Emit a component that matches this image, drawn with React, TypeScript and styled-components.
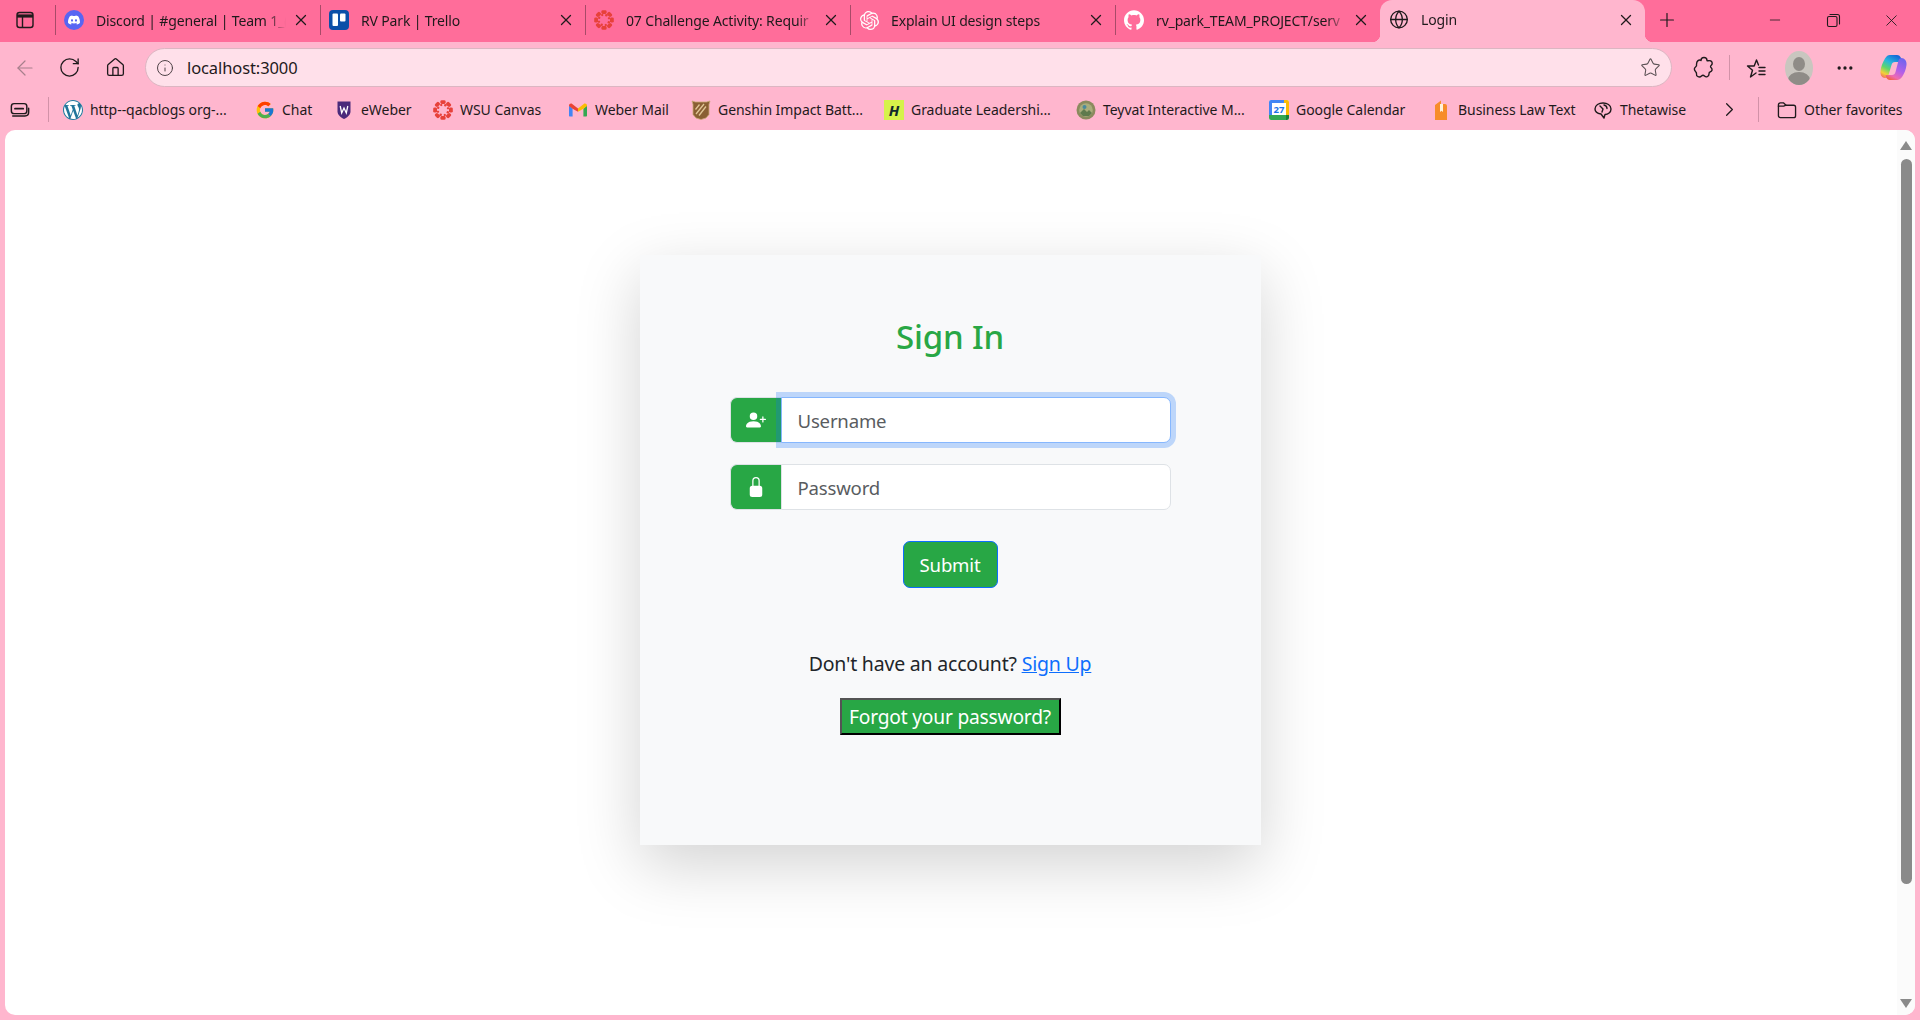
import React from 'react';
import styled, { createGlobalStyle } from 'styled-components';
import {
  ArrowLeft,
  ChevronRight,
  Globe,
  Home,
  Info,
  MoreHorizontal,
  Plus,
  RotateCw,
  Star,
  X,
  Minus,
} from 'lucide-react';
import { BsLockFill, BsPersonPlusFill } from 'react-icons/bs';
import { FaDiscord } from 'react-icons/fa';
import { FcGoogle } from 'react-icons/fc';
import { SiGithub, SiOpenai, SiWordpress } from 'react-icons/si';

const GlobalStyle = createGlobalStyle`
  html, body {
    margin: 0;
    padding: 0;
    height: 1020px;
    overflow: hidden;
    background: #ffb6ce;
  }
  * {
    box-sizing: border-box;
  }
`;

const chromeFont = `'Noto Sans', 'Open Sans', sans-serif`;

// Browser chrome
const Window = styled.div`
  width: 1920px;
  height: 1020px;
  display: flex;
  flex-direction: column;
  font-family: ${chromeFont};
  color: #1f1a1c;
`;

const TabStrip = styled.div`
  height: 42px;
  display: flex;
  align-items: stretch;
  background: #ff6d9a;
`;

const SidebarButton = styled.div`
  width: 55px;
  display: flex;
  align-items: center;
  justify-content: center;
  padding-bottom: 2px;
  padding-right: 5px;
`;

const Tab = styled.div<{ $active?: boolean }>`
  position: relative;
  width: 265px;
  height: ${props => (props.$active ? '42px' : '30px')};
  margin-top: ${props => (props.$active ? '0' : '5px')};
  padding: ${props => (props.$active ? '0 10px 3px 9px' : '0 10px 0 8px')};
  display: flex;
  align-items: center;
  gap: 12px;
  font-size: 14px;
  letter-spacing: -0.15px;
  border-left: ${props => (props.$active ? 'none' : '1px solid #a84a68')};
  background: ${props => (props.$active ? '#ffb6ce' : 'transparent')};
  border-radius: ${props => (props.$active ? '12px 12px 0 0' : '0')};

  ${props =>
    props.$active &&
    `
    &::before, &::after {
      content: '';
      position: absolute;
      bottom: 0;
      width: 8px;
      height: 8px;
    }
    &::before {
      left: -8px;
      background: radial-gradient(circle at 0 0, #ff6d9a 8px, #ffb6ce 8.5px);
    }
    &::after {
      right: -8px;
      background: radial-gradient(circle at 100% 0, #ff6d9a 8px, #ffb6ce 8.5px);
    }
  `}
`;

const TabIcon = styled.span`
  width: 20px;
  height: 20px;
  flex: none;
  display: flex;
  align-items: center;
  justify-content: center;
`;

const TabTitle = styled.span`
  flex: 1;
  min-width: 0;
  margin-right: -6px;
  overflow: hidden;
  white-space: nowrap;
  -webkit-mask-image: linear-gradient(to right, #000 90%, transparent 100%);
  mask-image: linear-gradient(to right, #000 90%, transparent 100%);
`;

const NewTab = styled.div`
  width: 44px;
  display: flex;
  align-items: center;
  justify-content: center;
  padding-bottom: 3px;
`;

const WindowControls = styled.div`
  margin-left: auto;
  display: flex;
`;

const WindowControl = styled.div`
  width: 58px;
  display: flex;
  align-items: center;
  justify-content: center;
  padding-bottom: 2px;
`;

const Toolbar = styled.div`
  height: 47px;
  padding: 6px 0 2px 2px;
  display: flex;
  align-items: stretch;
  background: #ffb6ce;
`;

const ToolButton = styled.div<{ $w: number; $faded?: boolean }>`
  width: ${props => props.$w}px;
  flex: none;
  display: flex;
  align-items: center;
  justify-content: center;
  color: ${props => (props.$faded ? '#a77f8c' : '#1f1a1c')};
`;

const AddressBar = styled.div`
  flex: 1;
  margin-left: 6px;
  padding: 0 10px;
  display: flex;
  align-items: center;
  gap: 13px;
  background: #ffe0ea;
  border: 1px solid #dcb6c2;
  border-radius: 20px;
  font-size: 16.5px;
  letter-spacing: -0.1px;
`;

const UrlText = styled.span`
  flex: 1;
`;

const ToolGroup = styled.div`
  margin-left: 11px;
  padding-right: 4px;
  display: flex;
  align-items: stretch;
`;

const ToolSeparator = styled.div`
  width: 1px;
  height: 25px;
  margin: 7px 4px 0;
  background: #d292a8;
`;

const Avatar = styled.div`
  position: relative;
  width: 28px;
  height: 34px;
  border-radius: 14px / 17px;
  overflow: hidden;
  background: #c9c6bf;

  &::before {
    content: '';
    position: absolute;
    left: 8px;
    top: 6px;
    width: 12px;
    height: 14px;
    border-radius: 50%;
    background: #8f8c87;
  }
  &::after {
    content: '';
    position: absolute;
    left: 3px;
    top: 21px;
    width: 22px;
    height: 16px;
    border-radius: 50%;
    background: #8f8c87;
  }
`;

const BookmarksBar = styled.div`
  height: 41px;
  padding-left: 10px;
  display: flex;
  align-items: center;
  background: #ffb6ce;
  font-size: 14px;
  letter-spacing: -0.05px;
`;

const BarSeparator = styled.div<{ $left: number; $right: number }>`
  width: 1px;
  height: 25px;
  flex: none;
  margin: 0 ${props => props.$right}px 0 ${props => props.$left}px;
  background: #d292a8;
`;

const Bookmark = styled.div<{ $w: number }>`
  width: ${props => props.$w}px;
  flex: none;
  display: flex;
  align-items: center;
  gap: 7px;
  white-space: nowrap;
`;

const BookmarkIcon = styled.span`
  width: 20px;
  height: 20px;
  flex: none;
  display: flex;
  align-items: center;
  justify-content: center;
`;

const WordpressBadge = styled.span`
  width: 20px;
  height: 20px;
  display: flex;
  align-items: center;
  justify-content: center;
  border-radius: 50%;
  background: #fff;
  color: #21759b;
`;

const HBadge = styled.span`
  width: 20px;
  height: 20px;
  display: flex;
  align-items: center;
  justify-content: center;
  background: #d6f24a;
  color: #10282c;
  font-size: 15px;
  font-weight: 700;
  font-style: italic;
  letter-spacing: 0;
`;

// Page viewport
const Viewport = styled.div`
  height: 885px;
  margin: 0 5px;
  display: flex;
  background: #ffffff;
  border-radius: 10px;
  overflow: hidden;
`;

const Content = styled.main`
  flex: 1;
  padding: 125px 2px 0 0;
  display: flex;
  justify-content: center;
  align-items: flex-start;
  font-family: 'Noto Sans', 'Open Sans', sans-serif;
`;

const Scrollbar = styled.div`
  width: 18px;
  padding: 11px 3px 7px 3px;
  display: flex;
  flex-direction: column;
  align-items: center;
  background: #fbfbfb;
`;

const ArrowUp = styled.div`
  width: 0;
  height: 0;
  border-left: 6px solid transparent;
  border-right: 6px solid transparent;
  border-bottom: 9px solid #8a8a8a;
`;

const ArrowDown = styled.div`
  width: 0;
  height: 0;
  margin-top: auto;
  border-left: 6px solid transparent;
  border-right: 6px solid transparent;
  border-top: 9px solid #8a8a8a;
`;

const Thumb = styled.div`
  width: 11px;
  height: 725px;
  margin-top: 9px;
  border-radius: 6px;
  background: #8a8a8a;
`;

// Login card
const Card = styled.section`
  width: 621px;
  height: 590px;
  padding-top: 54px;
  display: flex;
  flex-direction: column;
  align-items: center;
  background: #f8f9fa;
  box-shadow: 0 20px 60px rgba(0, 0, 0, 0.175);
`;

const Title = styled.h2`
  margin: 0 0 32px;
  height: 56px;
  line-height: 56px;
  font-size: 33px;
  font-weight: 550;
  letter-spacing: -0.2px;
  color: #28a745;
`;

const Form = styled.form`
  width: 441px;
  display: flex;
  flex-direction: column;
  align-items: center;
  gap: 21px;
`;

const InputGroup = styled.div`
  width: 100%;
  height: 46px;
  display: flex;
`;

const Addon = styled.span`
  width: 51px;
  flex: none;
  display: flex;
  align-items: center;
  justify-content: center;
  background: #28a745;
  color: #fff;
  border: 1px solid #dee2e6;
  border-right: none;
  border-radius: 7px 0 0 7px;
`;

const Field = styled.input<{ $focused?: boolean }>`
  position: relative;
  flex: 1;
  min-width: 0;
  padding: 0 16px;
  font-family: inherit;
  font-size: 18.6px;
  letter-spacing: -0.2px;
  background: #fff;
  outline: none;
  border: 1px solid ${props => (props.$focused ? '#86b7fe' : '#dee2e6')};
  border-radius: 0 7px 7px 0;
  box-shadow: ${props => (props.$focused ? '0 0 0 5px rgba(13, 110, 253, 0.25)' : 'none')};

  &::placeholder {
    color: #595c5f;
    opacity: 1;
  }
`;

const SubmitButton = styled.button`
  width: 95px;
  height: 47px;
  margin-top: 10px;
  font-family: inherit;
  font-size: 18.6px;
  letter-spacing: -0.2px;
  color: #fff;
  background: #28a745;
  border: 1px solid #0d6efd;
  border-radius: 7px;
  cursor: pointer;
`;

const SignupText = styled.p`
  margin: 62px 0 0;
  height: 28px;
  line-height: 28px;
  font-size: 19.5px;
  letter-spacing: -0.2px;
  color: #212529;
`;

const SignupLink = styled.a`
  color: #0d6efd;
  text-decoration: underline;
`;

const ForgotButton = styled.button`
  width: 221px;
  height: 37px;
  margin-top: 20px;
  padding: 0;
  font-family: inherit;
  font-size: 19.2px;
  letter-spacing: -0.2px;
  color: #fff;
  background: #28a745;
  border: 2px outset #000;
  cursor: pointer;
`;

// Small drawn icons for things the icon packages don't carry
const ink = { fill: 'none', stroke: '#1f1a1c', strokeWidth: 1.4, strokeLinecap: 'round', strokeLinejoin: 'round' } as const;

const SidebarIcon = () => (
  <svg width="20" height="20" viewBox="0 0 20 20" {...ink}>
    <rect x="2" y="2.5" width="16" height="15" rx="2.5" />
    <path d="M2 6h16" strokeWidth="3.2" strokeLinecap="butt" />
    <path d="M7.5 7v10" />
  </svg>
);

const CanvasIcon = ({ size = 20 }: { size?: number }) => (
  <svg width={size} height={size} viewBox="0 0 20 20">
    <g fill="#e7413a">
      {[0, 45, 90, 135, 180, 225, 270, 315].map(deg => (
        <g key={deg} transform={`rotate(${deg} 10 10)`}>
          <rect x="7.4" y="0.2" width="5.2" height="3.8" rx="1.4" />
          <circle cx="12.3" cy="5.2" r="1.2" />
        </g>
      ))}
    </g>
  </svg>
);

const TrelloIcon = () => (
  <svg width="20" height="20" viewBox="0 0 20 20">
    <rect width="20" height="20" rx="4" fill="#0b4fa8" />
    <rect x="3.5" y="3.5" width="5.5" height="12.5" rx="1" fill="#fff" />
    <rect x="11" y="3.5" width="5.5" height="8" rx="1" fill="#fff" />
  </svg>
);

const WeberIcon = () => (
  <svg width="20" height="20" viewBox="0 0 20 20">
    <path d="M3.5 1.5h13v10c0 3.5-3.5 6-6.5 7.5-3-1.5-6.5-4-6.5-7.5z" fill="#4b2a7b" />
    <path d="M6.2 6l1.5 7 2.3-5 2.3 5 1.5-7" fill="none" stroke="#fff" strokeWidth="1.3" />
  </svg>
);

const GmailIcon = () => (
  <svg width="20" height="20" viewBox="0 0 20 20">
    <path d="M1 5.5v10c0 .6.4 1 1 1h2.6V8.7z" fill="#4285f4" />
    <path d="M19 5.5v10c0 .6-.4 1-1 1h-2.6V8.7z" fill="#34a853" />
    <path d="M1 5.5C1 3.6 3 3 4.2 3.9L10 8.4v3.3L4.6 8.7 1 6z" fill="#ea4335" />
    <path d="M19 5.5c0-1.9-2-2.5-3.2-1.6L10 8.4v3.3l5.400-3L19 6z" fill="#fbbc04" />
  </svg>
);

const GenshinIcon = () => (
  <svg width="20" height="20" viewBox="0 0 20 20">
    <path d="M1 1l3.500 1h11L19 1l-1 3.500v10L15 18l-5 1.500L5 18l-3-3.500v-10z" fill="#8a5f33" stroke="#c9a877" strokeWidth="0.8" />
    <path d="M5 14l8-10M8 15.500l7-9M4.500 9.500l4-5" stroke="#e0c596" strokeWidth="1.3" />
  </svg>
);

const TeyvatIcon = () => (
  <svg width="20" height="20" viewBox="0 0 20 20">
    <circle cx="10" cy="10" r="9.5" fill="#8b8a5e" />
    <circle cx="10" cy="10" r="6.8" fill="#a9ad7c" />
    <path d="M4 13l4-4 3 3 2-2 3 3-3 3H7z" fill="#5f7a4d" />
    <circle cx="8.5" cy="7" r="2" fill="#4a8a9c" />
  </svg>
);

const CalendarIcon = () => (
  <svg width="20" height="20" viewBox="0 0 20 20">
    <rect width="20" height="20" rx="2" fill="#fff" />
    <path d="M0 2a2 2 0 012-2h13v3H3v12H0z" fill="#4285f4" />
    <path d="M15 0h3a2 2 0 012 2v13h-3V3h-2z" fill="#fbbc04" />
    <path d="M0 15h17v5H2a2 2 0 01-2-2z" fill="#34a853" />
    <path d="M17 15h3v3a2 2 0 01-2 2h-1z" fill="#188038" />
    <text x="10" y="13" textAnchor="middle" fontSize="9.5" fontWeight="700" fontFamily="'Noto Sans', sans-serif" fill="#1a73e8">
      27
    </text>
  </svg>
);

const BookIcon = () => (
  <svg width="20" height="20" viewBox="0 0 20 20">
    <path d="M4 5l6-4.500V4h4a2 2 0 012 2v14H4z" fill="#f78c2a" />
    <path d="M9 4h3v8l-1.500-1.200L9 12z" fill="#fff2dc" />
  </svg>
);

const ThetaIcon = () => (
  <svg width="20" height="20" viewBox="0 0 20 20" {...ink}>
    <path d="M2 9c0-4 4-6 8-6s8 2 8 6c0 3.500-3 5.500-6 5.500l-1 3.500-3-4C5 13.500 2 12 2 9z" />
    <path d="M7 6l3 3-1 3M11 5c2 .5 3 2 3 3.500" />
  </svg>
);

const CollectionsIcon = () => (
  <svg width="22" height="20" viewBox="0 0 22 20" {...ink}>
    <rect x="1.500" y="3" width="17" height="11" rx="3" strokeWidth="1.6" />
    <path d="M5.500 8.500h9" strokeWidth="2" />
    <path d="M3 16.500h13.500c2.500 0 4-1.500 4-4V8" strokeWidth="1.6" />
  </svg>
);

const FolderIcon = () => (
  <svg width="21" height="20" viewBox="0 0 21 20" {...ink}>
    <path d="M1.500 4.500a2 2 0 012-2h3.200l2.800 2.500h8a2 2 0 012 2v9a2 2 0 01-2 2h-14a2 2 0 01-2-2z" />
    <path d="M1.500 6h5.500l2.500-1" />
  </svg>
);

const RestoreIcon = () => (
  <svg width="15" height="15" viewBox="0 0 15 15" {...ink} strokeWidth="1.1">
    <rect x="1.500" y="3.500" width="9.500" height="10" rx="1.500" />
    <path d="M4 1.500h7.500a2 2 0 012 2V11" />
  </svg>
);

const PuzzleIcon = () => (
  <svg width="22" height="24" viewBox="0 0 22 24" {...ink}>
    <path d="M8 4.500c0-4 6-4 6 0 0 1 2-.5 4 .5 1.500 1 1.500 3 .5 4-1 1-1.500 1.500-.5 2.500 2 2 1 4-1 4.500-1 .2-1 1-1 2 0 3-3 3.500-4.500 2-1-1-2-1-3 0-2 2-5.500 .5-5-2 .2-1.500-.5-2-1-2.500-1.500-1.500-1.500-3.500 0-4.500 1-.7 1.500-1 1-2.500C3.500 5 6 3 8 4.500z" />
  </svg>
);

const FavoritesIcon = () => (
  <svg width="24" height="24" viewBox="0 0 24 24" {...ink}>
    <path d="M14.500 9l-2-5-2.300 6H3.500l5 4.200L6.500 21l5.500-4" />
    <path d="M15 11.500h6M15 15h6M15 18.500h6" />
  </svg>
);

const CopilotIcon = () => (
  <svg width="27" height="27" viewBox="0 0 27 27">
    <defs>
      <linearGradient id="copilotLeft" x1="0.7" y1="0" x2="0.2" y2="1">
        <stop offset="0" stopColor="#1668d8" />
        <stop offset="0.35" stopColor="#27b6dd" />
        <stop offset="0.62" stopColor="#5fd66a" />
        <stop offset="0.85" stopColor="#f5cf3a" />
        <stop offset="1" stopColor="#f0765a" />
      </linearGradient>
      <linearGradient id="copilotRight" x1="0.7" y1="0" x2="0.2" y2="1">
        <stop offset="0" stopColor="#6f63ee" />
        <stop offset="0.5" stopColor="#b45fe8" />
        <stop offset="0.8" stopColor="#f06ab0" />
        <stop offset="1" stopColor="#f2603c" />
      </linearGradient>
    </defs>
    <path d="M10 1h7c2 0 3 1 4 3l1 4h-7c-2 0-3 1-3.500 3L8.500 21c-.5 2-1.500 3-3.500 3-3 0-5-3-4.500-7C1 12 3 8 5 4.500 6.500 2 8 1 10 1z" fill="url(#copilotLeft)" />
    <path d="M21.500 4c3 0 5.500 3 5 7-.5 5-2.500 9-4.500 12-1.500 2-3 3-5 3h-7c-2 0-3-1-4-3l-.5-2H12c2 0 3-1 3.500-3l3-11.500C19 5 20 4 21.500 4z" fill="url(#copilotRight)" />
  </svg>
);

interface TabData {
  title: string;
  icon: React.ReactNode;
}

const tabs: TabData[] = [
  {
    title: 'Discord | #general | Team 1_(',
    icon: (
      <svg width="20" height="20" viewBox="0 0 20 20">
        <circle cx="10" cy="10" r="10" fill="#5865f2" />
        <g transform="translate(3.500 3.500) scale(0.8125)">
          <FaDiscord size={16} color="#fff" />
        </g>
      </svg>
    ),
  },
  { title: 'RV Park | Trello', icon: <TrelloIcon /> },
  { title: '07 Challenge Activity: Requir', icon: <CanvasIcon /> },
  { title: 'Explain UI design steps', icon: <SiOpenai size={19} color="#fff" /> },
  { title: 'rv_park_TEAM_PROJECT/serv', icon: <SiGithub size={20} color="#fff" /> },
];

interface BookmarkData {
  label: string;
  width: number;
  icon: React.ReactNode;
}

const bookmarks: BookmarkData[] = [
  { label: 'http--qacblogs org-...', width: 192, icon: <WordpressBadge><SiWordpress size={20} /></WordpressBadge> },
  { label: 'Chat', width: 79, icon: <FcGoogle size={20} /> },
  { label: 'eWeber', width: 99, icon: <WeberIcon /> },
  { label: 'WSU Canvas', width: 135, icon: <CanvasIcon /> },
  { label: 'Weber Mail', width: 123, icon: <GmailIcon /> },
  { label: 'Genshin Impact Batt...', width: 193, icon: <GenshinIcon /> },
  { label: 'Graduate Leadershi...', width: 192, icon: <HBadge>H</HBadge> },
  { label: 'Teyvat Interactive M...', width: 193, icon: <TeyvatIcon /> },
  { label: 'Google Calendar', width: 162, icon: <CalendarIcon /> },
  { label: 'Business Law Text', width: 162, icon: <BookIcon /> },
  { label: 'Thetawise', width: 125, icon: <ThetaIcon /> },
];

const App: React.FC = () => {
  return (
    <Window>
      <GlobalStyle />
      <TabStrip>
        <SidebarButton>
          <SidebarIcon />
        </SidebarButton>
        {tabs.map(tab => (
          <Tab key={tab.title}>
            <TabIcon>{tab.icon}</TabIcon>
            <TabTitle>{tab.title}</TabTitle>
            <X size={18} strokeWidth={1.7} />
          </Tab>
        ))}
        <Tab $active>
          <TabIcon>
            <Globe size={21} strokeWidth={1.6} />
          </TabIcon>
          <TabTitle>Login</TabTitle>
          <X size={18} strokeWidth={1.7} />
        </Tab>
        <NewTab>
          <Plus size={22} strokeWidth={1.3} />
        </NewTab>
        <WindowControls>
          <WindowControl>
            <Minus size={16} strokeWidth={1.2} />
          </WindowControl>
          <WindowControl>
            <RestoreIcon />
          </WindowControl>
          <WindowControl>
            <X size={19} strokeWidth={1.1} />
          </WindowControl>
        </WindowControls>
      </TabStrip>

      <Toolbar>
        <ToolButton $w={45} $faded>
          <ArrowLeft size={24} strokeWidth={1.2} />
        </ToolButton>
        <ToolButton $w={45}>
          <RotateCw size={23} strokeWidth={1.4} />
        </ToolButton>
        <ToolButton $w={47}>
          <Home size={21} strokeWidth={1.5} />
        </ToolButton>
        <AddressBar>
          <Info size={18} strokeWidth={1.3} color="#4a3f43" />
          <UrlText>localhost:3000</UrlText>
          <Star size={21} strokeWidth={1.2} color="#5a5054" />
        </AddressBar>
        <ToolGroup>
          <ToolButton $w={42}>
            <PuzzleIcon />
          </ToolButton>
          <ToolSeparator />
          <ToolButton $w={44}>
            <FavoritesIcon />
          </ToolButton>
          <ToolButton $w={42}>
            <Avatar />
          </ToolButton>
          <ToolButton $w={50}>
            <MoreHorizontal size={20} strokeWidth={2} />
          </ToolButton>
          <ToolButton $w={46}>
            <CopilotIcon />
          </ToolButton>
        </ToolGroup>
      </Toolbar>

      <BookmarksBar>
        <BookmarkIcon>
          <CollectionsIcon />
        </BookmarkIcon>
        <BarSeparator $left={18} $right={14} />
        {bookmarks.map(bookmark => (
          <Bookmark key={bookmark.label} $w={bookmark.width}>
            <BookmarkIcon>{bookmark.icon}</BookmarkIcon>
            <span>{bookmark.label}</span>
          </Bookmark>
        ))}
        <ChevronRight size={23} strokeWidth={1.3} />
        <BarSeparator $left={17} $right={18} />
        <Bookmark $w={126}>
          <BookmarkIcon>
            <FolderIcon />
          </BookmarkIcon>
          <span>Other favorites</span>
        </Bookmark>
      </BookmarksBar>

      <Viewport>
        <Content>
          <Card>
            <Title>Sign In</Title>
            <Form onSubmit={e => e.preventDefault()}>
              <InputGroup>
                <Addon>
                  <BsPersonPlusFill size={20} />
                </Addon>
                <Field $focused placeholder="Username" />
              </InputGroup>
              <InputGroup>
                <Addon>
                  <BsLockFill size={20} />
                </Addon>
                <Field type="password" placeholder="Password" />
              </InputGroup>
              <SubmitButton type="submit">Submit</SubmitButton>
            </Form>
            <SignupText>
              Don't have an account? <SignupLink href="#">Sign Up</SignupLink>
            </SignupText>
            <ForgotButton type="button">Forgot your password?</ForgotButton>
          </Card>
        </Content>
        <Scrollbar>
          <ArrowUp />
          <Thumb />
          <ArrowDown />
        </Scrollbar>
      </Viewport>
    </Window>
  );
};

export default App;
